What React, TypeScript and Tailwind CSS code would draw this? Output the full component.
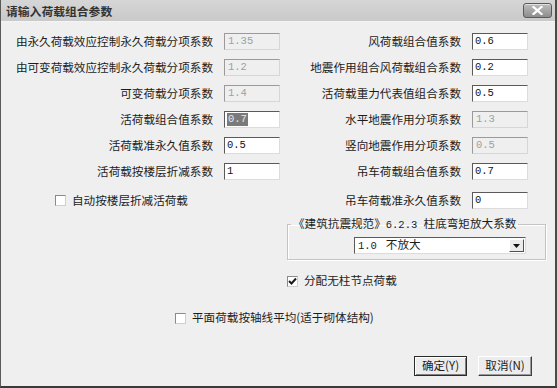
import React from "react";

const CJK = "font-['Noto_Sans_CJK_SC',sans-serif]";

function Field({ value, disabled, selected }: { value: string; disabled?: boolean; selected?: boolean }) {
  if (disabled) {
    return (
      <div className="flex h-[17px] w-[56px] items-center border border-t-[#9a9a9a] border-l-[#9a9a9a] border-r-[#d6d6d6] border-b-[#d6d6d6] bg-[#efefef] pl-[3px] font-['Liberation_Mono',monospace] text-[10.5px] leading-none text-[#a0a0a0]">
        {value}
      </div>
    );
  }
  return (
    <div className="flex h-[17px] w-[56px] items-center border border-t-[#5a5a5a] border-l-[#5a5a5a] border-r-[#dcdcdc] border-b-[#dcdcdc] bg-white pl-[2px] font-['Liberation_Mono',monospace] text-[10.5px] leading-none text-[#111]">
      {selected ? (
        <span className="bg-[#7a7a7a] px-[1px] py-[1px] text-[#e8e8e8]">{value}</span>
      ) : (
        value
      )}
    </div>
  );
}

function Label({ children }: { children: React.ReactNode }) {
  return (
    <div className={`flex h-[17px] items-center justify-end whitespace-nowrap ${CJK} text-[11.6px] text-[#1c1c1c]`}>
      {children}
    </div>
  );
}

function Check({ checked, label }: { checked?: boolean; label: string }) {
  return (
    <div className={`flex h-[14px] items-center gap-[6px] ${CJK} text-[11.6px] text-[#1c1c1c]`}>
      <div className="flex h-[11px] w-[11px] items-center justify-center border border-t-[#8a8a8a] border-l-[#8a8a8a] border-r-[#cfcfcf] border-b-[#cfcfcf] bg-white">
        {checked && (
          <svg width="9" height="9" viewBox="0 0 9 9">
            <path d="M1 4 L3.5 6.5 L8 1.5" stroke="#1a1a1a" strokeWidth="2" fill="none" />
          </svg>
        )}
      </div>
      <span className="whitespace-nowrap">{label}</span>
    </div>
  );
}

function Button({ children, def }: { children: React.ReactNode; def?: boolean }) {
  return (
    <div
      className={
        def
          ? `flex h-[20px] w-[53px] items-center justify-center border border-[#2a2a2a] bg-[#ececec] shadow-[inset_1px_1px_0_#ffffff,inset_-1px_-1px_0_#808080] ${CJK} text-[11.6px] text-[#1c1c1c]`
          : `flex h-[20px] w-[54px] items-center justify-center border border-t-[#ffffff] border-l-[#ffffff] border-r-[#404040] border-b-[#404040] bg-[#ececec] shadow-[inset_-1px_-1px_0_#9a9a9a] ${CJK} text-[11.6px] text-[#1c1c1c]`
      }
    >
      {children}
    </div>
  );
}

export default function App() {
  return (
    <div className="flex h-[388px] w-[557px] flex-col overflow-hidden border-l border-r-2 border-b-2 border-l-[#5a5a5a] border-r-[#4a4a4a] border-b-[#3a3a3a] bg-[#efefef]">
      {/* Title bar */}
      <div className="flex h-[22px] shrink-0 items-center justify-between border-b border-b-[#f4f4f4] bg-gradient-to-b from-[#d6d6d6] to-[#c9c9c9] pl-[5px] pr-[3px]">
        <span className={`${CJK} text-[11.8px] font-bold text-[#333]`}>请输入荷载组合参数</span>
        <div className="flex h-[15px] w-[29px] items-center justify-center rounded-[3px] border border-[#5a5a5a] bg-gradient-to-b from-[#bdbdbd] to-[#8e8e8e] shadow-[inset_0_1px_0_#e0e0e0]">
          <svg width="11" height="9" viewBox="0 0 11 9">
            <path d="M1.5 1 L9.5 8 M9.5 1 L1.5 8" stroke="#ffffff" strokeWidth="2.2" strokeLinecap="square" />
          </svg>
        </div>
      </div>

      {/* Body */}
      <div className="flex flex-1 flex-col pt-[11px]">
        <div className="grid grid-cols-[212px_56px_170px_56px] gap-x-[11px] gap-y-[9px]">
          <Label>由永久荷载效应控制永久荷载分项系数</Label>
          <Field value="1.35" disabled />
          <Label>风荷载组合值系数</Label>
          <Field value="0.6" />

          <Label>由可变荷载效应控制永久荷载分项系数</Label>
          <Field value="1.2" disabled />
          <Label>地震作用组合风荷载组合系数</Label>
          <Field value="0.2" />

          <Label>可变荷载分项系数</Label>
          <Field value="1.4" disabled />
          <Label>活荷载重力代表值组合系数</Label>
          <Field value="0.5" />

          <Label>活荷载组合值系数</Label>
          <Field value="0.7" selected />
          <Label>水平地震作用分项系数</Label>
          <Field value="1.3" disabled />

          <Label>活荷载准永久值系数</Label>
          <Field value="0.5" />
          <Label>竖向地震作用分项系数</Label>
          <Field value="0.5" disabled />

          <Label>活荷载按楼层折减系数</Label>
          <Field value="1" />
          <Label>吊车荷载组合值系数</Label>
          <Field value="0.7" />

          <div className="col-span-2 mt-[3px] flex items-center pl-[54px]">
            <Check label="自动按楼层折减活荷载" />
          </div>
          <div className="mt-[3px]">
            <Label>吊车荷载准永久值系数</Label>
          </div>
          <div className="mt-[3px]">
            <Field value="0" />
          </div>
        </div>

        {/* Group box */}
        <fieldset className="ml-[286px] mt-[7px] w-[259px] border border-[#c4c4c4] pb-[5px] shadow-[1px_1px_0_#ffffff,inset_1px_1px_0_#ffffff]">
          <legend className={`ml-[3px] px-[2px] ${CJK} text-[11.6px] leading-[14px] text-[#1c1c1c]`}>
            《建筑抗震规范》<span className="font-['Liberation_Mono',monospace] text-[10.5px]">6.2.3 </span>柱底弯矩放大系数
          </legend>
          <div className="ml-[66px] mt-[5px] flex h-[17px] w-[172px] items-center justify-between border border-t-[#5a5a5a] border-l-[#5a5a5a] border-r-[#dcdcdc] border-b-[#dcdcdc] bg-white pl-[3px] pr-[1px]">
            <span className={`${CJK} text-[11.6px] text-[#1c1c1c]`}>
              <span className="font-['Liberation_Mono',monospace] text-[10.5px]">1.0 </span>
              &nbsp;不放大
            </span>
            <div className="flex h-[13px] w-[15px] items-center justify-center border border-t-[#ffffff] border-l-[#ffffff] border-r-[#505050] border-b-[#505050] bg-[#ececec]">
              <svg width="7" height="4" viewBox="0 0 7 4">
                <path d="M0 0 L7 0 L3.5 4 Z" fill="#111" />
              </svg>
            </div>
          </div>
        </fieldset>

        <div className="mt-[14px] pl-[286px]">
          <Check checked label="分配无柱节点荷载" />
        </div>

        <div className="mt-[23px] pl-[174px]">
          <Check label="平面荷载按轴线平均(适于砌体结构)" />
        </div>

        <div className="mt-[31px] flex justify-end gap-[11px] pr-[23px]">
          <Button def>确定(Y)</Button>
          <Button>取消(N)</Button>
        </div>
      </div>
    </div>
  );
}
